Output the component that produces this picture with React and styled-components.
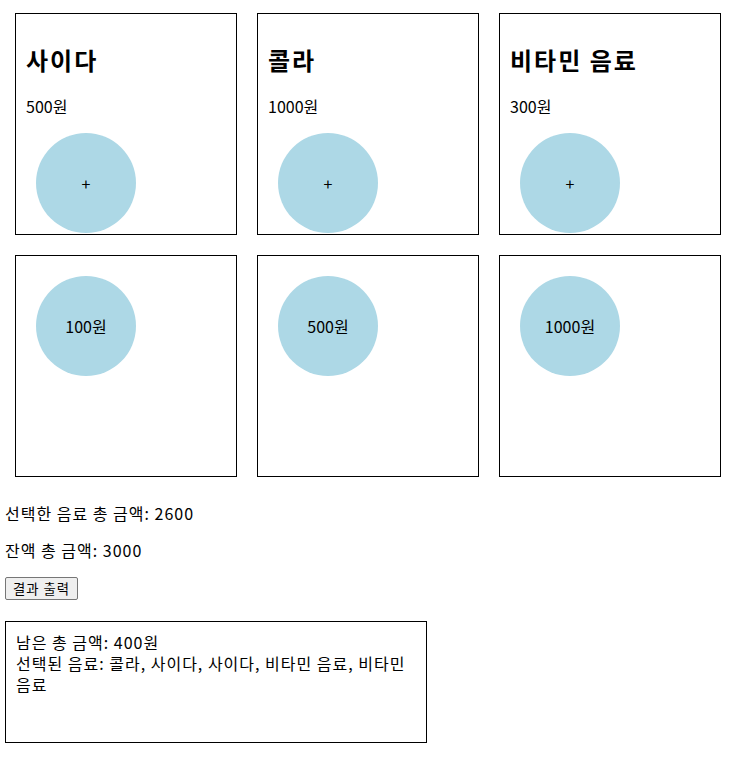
import React from "react"
import styled, { createGlobalStyle } from "styled-components"

const drinks = [
    { name: "사이다", price: 500 },
    { name: "콜라", price: 1000 },
    { name: "비타민 음료", price: 300 },
]

const coins = [100, 500, 1000]

const App = () => {
    return (
        <Page>
            <GlobalStyle />
            <Grid>
                {drinks.map((d) => (
                    <Card key={d.name}>
                        <Title>{d.name}</Title>
                        <Price>{d.price}원</Price>
                        <Circle>+</Circle>
                    </Card>
                ))}
                {coins.map((c) => (
                    <Card key={c}>
                        <Circle>{c}원</Circle>
                    </Card>
                ))}
            </Grid>

            <Text>선택한 음료 총 금액: 2600</Text>
            <Text>잔액 총 금액: 3000</Text>
            <Button>결과 출력</Button>

            <Result>
                남은 총 금액: 400원
                <br />
                선택된 음료: 콜라, 사이다, 사이다, 비타민 음료, 비타민 음료
            </Result>
        </Page>
    )
}

export default App

const GlobalStyle = createGlobalStyle`
body {
    margin: 0;
    background: white;
    color: black;
    font-family: "Noto Sans CJK KR", "Noto Sans", sans-serif;
}
`

const Page = styled.div`
padding: 3px 5px 16px 5px;
`

const Grid = styled.div`
display: flex;
flex-wrap: wrap;
width: 726px;
`

const Card = styled.div`
width: 200px;
height: 200px;
padding: 10px;
margin: 10px;
border: 1px solid black;
`

const Title = styled.h2`
font-size: 24px;
line-height: 32px;
font-weight: bold;
letter-spacing: 2px;
margin: 20px 0;
`

const Text = styled.p`
font-size: 16px;
line-height: 21px;
letter-spacing: 1px;
margin: 16px 0;
`

const Price = styled(Text)`
letter-spacing: 0;
`

const Circle = styled.div`
width: 100px;
height: 100px;
margin: 10px;
border-radius: 50%;
background-color: lightblue;
display: flex;
justify-content: center;
align-items: center;
font-size: 16px;
`

const Button = styled.button`
display: block;
height: 23px;
padding: 1px 7px;
font-family: "Noto Sans CJK KR", "Noto Sans", sans-serif;
font-size: 13.33px;
letter-spacing: 1px;
color: black;
background-color: #efefef;
border: 1px solid #767676;
border-radius: 2px;
`

const Result = styled.div`
width: 400px;
height: 100px;
margin-top: 21px;
padding: 10px;
border: 1px solid black;
font-size: 16px;
line-height: 21px;
letter-spacing: 1px;
`
